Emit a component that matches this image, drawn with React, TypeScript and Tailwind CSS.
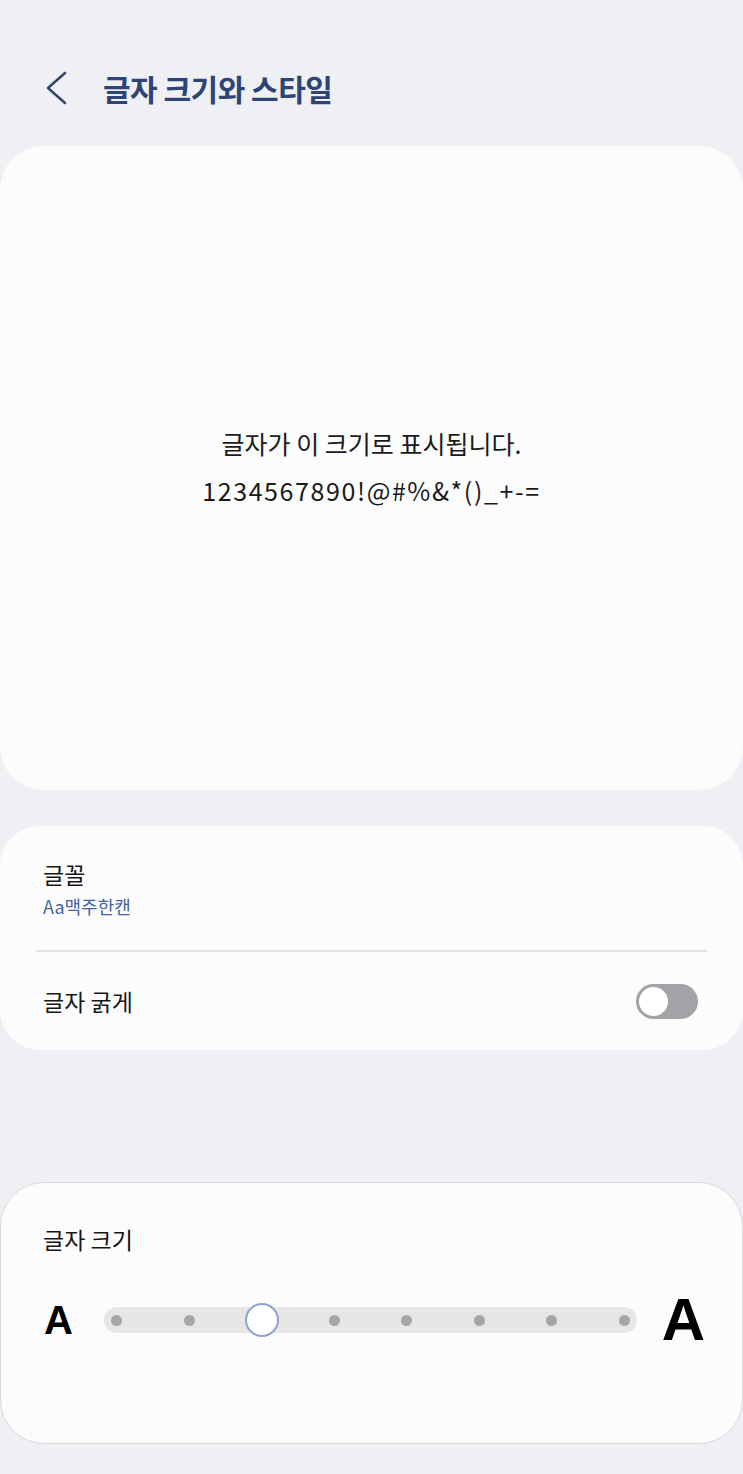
export default function App() {
  const steps = [0, 1, 2, 3, 4, 5, 6, 7];
  const current = 2;

  return (
    <div
      className="min-h-[1474px] w-full bg-[#eff0f4] flex flex-col"
      style={{ fontFamily: '"Noto Sans CJK KR", "Noto Sans", sans-serif' }}
    >
      {/* Header */}
      <div className="h-[146px] flex items-center pl-[44px] pt-[30px]">
        <svg width="26" height="36" viewBox="0 0 26 36" fill="none" className="mr-[33px]">
          <polyline
            points="21,3 4,18 21,33"
            stroke="#34476f"
            strokeWidth="2.6"
            strokeLinecap="round"
            strokeLinejoin="round"
          />
        </svg>
        <h1 className="text-[30px] font-bold text-[#2e4476] tracking-[-0.5px]">글자 크기와 스타일</h1>
      </div>

      {/* Preview */}
      <div className="h-[644px] rounded-[44px] bg-[#fcfcfc] flex flex-col items-center justify-center text-[25px] leading-[47px] text-[#1a1a1a] pb-[2px]">
        <p>글자가 이 크기로 표시됩니다.</p>
        <p className="tracking-[1.6px]">1234567890!@#%&amp;*()_+-=</p>
      </div>

      {/* Font settings */}
      <div className="mt-[36px] h-[224px] rounded-[40px] bg-[#fcfcfc] flex flex-col">
        <div className="pt-[32px] px-[43px] h-[124px]">
          <p className="text-[23px] leading-[32px] text-[#161616]">글꼴</p>
          <p className="text-[18px] leading-[22px] text-[#4364a3] mt-[5px]">Aa맥주한캔</p>
        </div>
        <div className="mx-[36px] h-[2px] bg-[#e2e2e4]" />
        <div className="flex-1 flex items-center justify-between pl-[43px] pr-[45px]">
          <p className="text-[23px] text-[#161616]">글자 굵게</p>
          <div className="w-[62px] h-[35px] rounded-full bg-[#a2a2a7] p-[3px] flex items-center">
            <div className="w-[29px] h-[29px] rounded-full bg-white" />
          </div>
        </div>
      </div>

      {/* Font size */}
      <div className="mt-[132px] h-[262px] rounded-[44px] bg-[#fcfcfc] border border-[#d8d8da] flex flex-col">
        <p className="pt-[40px] px-[42px] text-[23px] leading-[32px] text-[#161616]">글자 크기</p>
        <div className="mt-[35px] flex items-center pl-[43px] pr-[37px]">
          <span className="w-[60px] text-[40px] leading-none font-bold text-black" style={{ fontFamily: '"Liberation Sans", sans-serif' }}>
            A
          </span>
          <div className="flex-1 h-[26px] rounded-full bg-[#e6e6e7] flex items-center justify-between px-[7px]">
            {steps.map((s) => (
              <div key={s} className="relative w-[11px] h-[11px]">
                {s === current ? (
                  <div className="absolute left-1/2 top-1/2 -translate-x-1/2 -translate-y-1/2 w-[34px] h-[34px] rounded-full bg-white border-[2.5px] border-[#8ba2d3]" />
                ) : (
                  <div className="w-[11px] h-[11px] rounded-full bg-[#a6a6a8]" />
                )}
              </div>
            ))}
          </div>
          <span className="w-[68px] text-right text-[60px] leading-none font-bold text-black" style={{ fontFamily: '"Liberation Sans", sans-serif' }}>
            A
          </span>
        </div>
      </div>
    </div>
  );
}
